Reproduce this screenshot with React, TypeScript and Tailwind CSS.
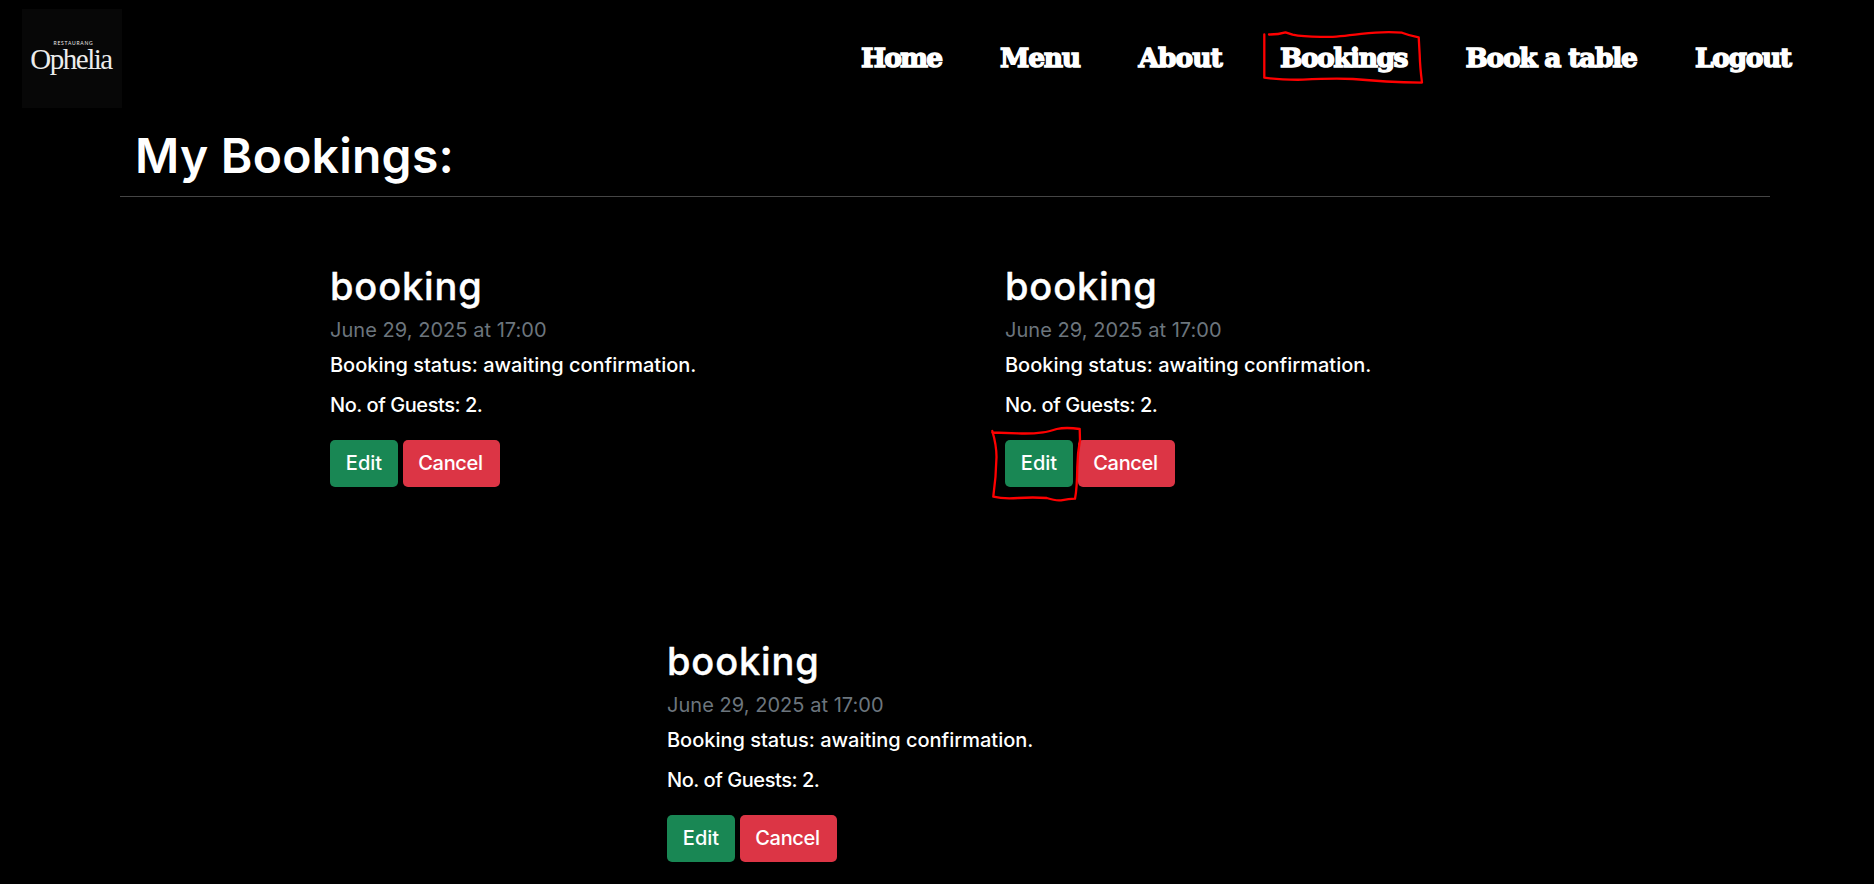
const navItems = [
  { label: "Home", style: "w-[139px] tracking-[-1.8px]" },
  { label: "Menu", style: "w-[138.5px] tracking-[-1.2px]" },
  { label: "About", style: "w-[141.5px] tracking-[-1px]" },
  { label: "Bookings", style: "w-[185.5px] tracking-[-1.5px]" },
  { label: "Book a table", style: "w-[229.5px] tracking-[-1.3px]" },
  { label: "Logout", style: "w-[97px] tracking-[-1.4px]" },
];

function Logo() {
  return (
    <a
      href="#"
      className="mt-[9px] ml-[22px] flex h-[99px] w-[100px] flex-col items-center bg-[#070707] pt-[31px] text-[#ececec]"
    >
      <span className="h-[7px] pl-[3px] font-['Lato'] text-[5px] leading-[7px] tracking-[0.75px] whitespace-nowrap">RESTAURANG</span>
      <span className="-mt-[3px] pr-[2px] font-['Liberation_Serif'] text-[29px] leading-[30px] tracking-[-1.5px] whitespace-nowrap">Ophelia</span>
    </a>
  );
}

function Header() {
  return (
    <header className="flex h-[117px] justify-between">
      <Logo />
      <nav className="mr-[82px] flex pt-[42px]">
        {navItems.map((item) => (
          <a
            key={item.label}
            href="#"
            className={`shrink-0 font-['DejaVu_Serif',serif] text-[26.5px] leading-[32px] font-bold whitespace-nowrap [-webkit-text-stroke:1.4px_white] ${item.style}`}
          >
            {item.label}
          </a>
        ))}
      </nav>
    </header>
  );
}

function Booking({ highlighted = false }: { highlighted?: boolean }) {
  return (
    <article className="w-[400px] whitespace-nowrap">
      <h2 className="text-[38px] leading-[46px] font-medium tracking-[0.85px] [-webkit-text-stroke:0.4px_white]">booking</h2>
      <p className="mt-[6px] text-[20px] leading-[30px] tracking-[0.04px] text-[#6c757d]">June 29, 2025 at 17:00</p>
      <p className="mt-[5px] text-[20px] leading-[30px] font-medium tracking-[-0.01px]">Booking status: awaiting confirmation.</p>
      <p className="mt-[10px] text-[20px] leading-[30px] font-medium tracking-[-0.45px]">No. of Guests: 2.</p>
      <div className="relative mt-[20px] flex gap-[5px]">
        <button className="h-[47px] w-[68px] rounded-[5px] bg-[#198754] pb-px text-[20px] font-medium">Edit</button>
        <button className="h-[47px] w-[97px] rounded-[5px] bg-[#dc3545] pr-[2px] pb-px text-[20px] font-medium tracking-[-0.3px]">Cancel</button>
        {highlighted && (
          <svg
            className="pointer-events-none absolute -top-[15px] -left-[15px]"
            width="95"
            height="80"
            viewBox="990 425 95 80"
            fill="none"
            stroke="#f00"
            strokeWidth="2.3"
            strokeLinecap="round"
            strokeLinejoin="round"
          >
            <path d="M992.3 431Q996.5 445 996.5 457Q996 478 993.3 496.7Q1003 499 1018 498Q1033 497 1046.7 498Q1056 501 1061 500.3Q1069 499 1075 498.7Q1077 489 1077.3 467Q1077.5 453 1080 440L1079.7 429Q1066 427 1056.7 429Q1048 432 1043 432.3Q1030 434 1018 433.3L992.3 432.5" />
          </svg>
        )}
      </div>
    </article>
  );
}

export default function App() {
  return (
    <div className="relative h-[884px] w-[1874px] overflow-hidden bg-black font-['Inter',sans-serif] text-white">
      <Header />
      <main className="ml-[120px] w-[1650px]">
        <h1 className="h-[79px] pt-[10px] pl-[15px] text-[48px] leading-[58px] font-semibold tracking-[0.25px]">My Bookings:</h1>
        <hr className="border-[#454545]" />
        <section className="flex gap-[275px] pt-[66px] pl-[210px]">
          <Booking />
          <Booking highlighted />
        </section>
        <section className="flex pt-[151px] pl-[547px]">
          <Booking />
        </section>
      </main>
      <svg
        className="pointer-events-none absolute top-[25px] left-[1260px]"
        width="170"
        height="65"
        viewBox="1260 25 170 65"
        fill="none"
        stroke="#f00"
        strokeWidth="2.3"
        strokeLinecap="round"
        strokeLinejoin="round"
      >
        <path d="M1264.3 34.5V77.7Q1280 80 1303 79.7Q1333 78 1353 79Q1385 82 1422 82.6Q1420 67 1419.7 55L1418.7 37.3Q1409 35.5 1402 32.7Q1386 31 1361 33.8Q1332 37.5 1324 36.8Q1303 37 1292.6 34.7L1285.5 32.3Q1278 34.6 1269 34.5" />
      </svg>
    </div>
  );
}
